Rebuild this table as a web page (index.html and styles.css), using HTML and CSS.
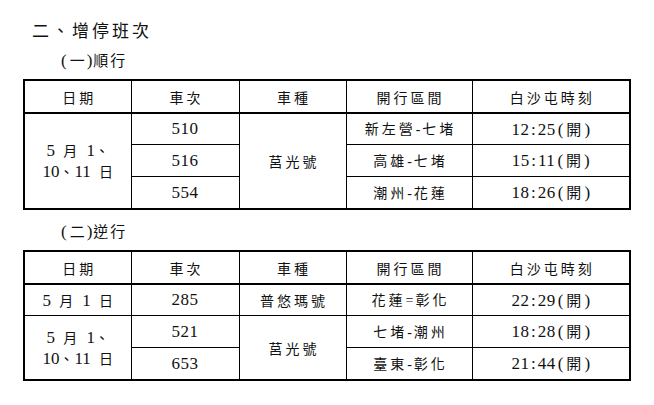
FILE: index.html
```html
<!DOCTYPE html>
<html lang="zh-Hant">
<head>
<meta charset="utf-8">
<link rel="stylesheet" href="styles.css">
</head>
<body>
<div class="page">
  <div class="title">二、增停班次</div>
  <div class="sub"><span class="pl">(</span>一<span class="pr">)</span>順行</div>
  <table class="tbl">
    <colgroup>
      <col class="c1"><col class="c2"><col class="c3"><col class="c4"><col class="c5">
    </colgroup>
    <thead>
      <tr class="hd"><th>日期</th><th>車次</th><th>車種</th><th>開行區間</th><th>白沙屯時刻</th></tr>
    </thead>
    <tbody>
      <tr>
        <td rowspan="3" class="date"><span class="num">5</span> 月 <span class="num">1</span>、<br><span class="num">10</span>、<span class="num">11</span> 日</td>
        <td class="num">510</td>
        <td rowspan="3">莒光號</td>
        <td>新左營<span class="dash">-</span>七堵</td>
        <td class="time"><span class="num">12<span class="colon">:</span>25</span><span class="tl">(</span>開<span class="tr">)</span></td>
      </tr>
      <tr>
        <td class="num">516</td>
        <td>高雄<span class="dash">-</span>七堵</td>
        <td class="time"><span class="num">15<span class="colon">:</span>11</span><span class="tl">(</span>開<span class="tr">)</span></td>
      </tr>
      <tr>
        <td class="num">554</td>
        <td>潮州<span class="dash">-</span>花蓮</td>
        <td class="time"><span class="num">18<span class="colon">:</span>26</span><span class="tl">(</span>開<span class="tr">)</span></td>
      </tr>
    </tbody>
  </table>
  <div class="sub sub2"><span class="pl">(</span>二<span class="pr">)</span>逆行</div>
  <table class="tbl">
    <colgroup>
      <col class="c1"><col class="c2"><col class="c3"><col class="c4"><col class="c5">
    </colgroup>
    <thead>
      <tr class="hd"><th>日期</th><th>車次</th><th>車種</th><th>開行區間</th><th>白沙屯時刻</th></tr>
    </thead>
    <tbody>
      <tr>
        <td class="date"><span class="num">5</span> 月 <span class="num">1</span> 日</td>
        <td class="num">285</td>
        <td>普悠瑪號</td>
        <td>花蓮<span class="dash">=</span>彰化</td>
        <td class="time"><span class="num">22<span class="colon">:</span>29</span><span class="tl">(</span>開<span class="tr">)</span></td>
      </tr>
      <tr>
        <td rowspan="2" class="date"><span class="num">5</span> 月 <span class="num">1</span>、<br><span class="num">10</span>、<span class="num">11</span> 日</td>
        <td class="num">521</td>
        <td rowspan="2">莒光號</td>
        <td>七堵<span class="dash">-</span>潮州</td>
        <td class="time"><span class="num">18<span class="colon">:</span>28</span><span class="tl">(</span>開<span class="tr">)</span></td>
      </tr>
      <tr>
        <td class="num">653</td>
        <td>臺東<span class="dash">-</span>彰化</td>
        <td class="time"><span class="num">21<span class="colon">:</span>44</span><span class="tl">(</span>開<span class="tr">)</span></td>
      </tr>
    </tbody>
  </table>
</div>
</body>
</html>
```
FILE: styles.css
```css
html, body {
  margin: 0;
  padding: 0;
  background: #ffffff;
}
body {
  font-family: "Noto Sans CJK TC", "Noto Sans CJK SC", sans-serif;
  color: #111111;
}
.page {
  padding: 19px 0 0 23px;
}
.title {
  margin-left: 9px;
  font-size: 17px;
  line-height: 21px;
  height: 21px;
  letter-spacing: 3px;
}
.sub {
  margin: 10px 0 9px 37px;
  font-size: 15px;
  line-height: 20px;
  height: 20px;
  letter-spacing: 2px;
}
.sub .pl, .sub .pr {
  font-family: "Liberation Serif", serif;
  font-size: 17px;
  letter-spacing: 0;
}
.sub .pl { margin: 0 3px 0 1px; }
.sub .pr { margin: 0 1px 0 0; }
.sub2 {
  margin-top: 11px;
  margin-bottom: 9px;
}
.num {
  font-family: "Liberation Serif", serif;
}
.tbl {
  border-collapse: collapse;
  width: 606px;
  table-layout: fixed;
  border: 2px solid #000;
}
.c1 { width: 107px; }
.c2 { width: 108px; }
.c3 { width: 107px; }
.c4 { width: 126px; }
.c5 { width: 158px; }
.tbl th, .tbl td {
  border: 1px solid #000;
  padding: 0 0 0 3px;
  text-align: center;
  vertical-align: middle;
  font-size: 14px;
  font-weight: normal;
  letter-spacing: 3px;
  line-height: 20px;
}
.tbl thead th {
  border-bottom: 2px solid #000;
  height: 31px;
}
.tbl tbody td {
  height: 30px;
}
.tbl tbody tr + tr td {
  height: 31px;
}
.tbl td.num {
  font-size: 17px;
  letter-spacing: 0.5px;
  padding-left: 0;
}
.tbl td.time {
  letter-spacing: 0;
  padding-left: 0;
  font-size: 15px;
}
.tbl td.time .num {
  font-size: 17px;
  letter-spacing: 0.5px;
}
.colon {
  margin: 0 1.5px;
}
.tl, .tr {
  font-family: "Liberation Serif", serif;
  font-size: 17px;
}
.tl { margin: 0 3px 0 2px; }
.tr { margin: 0 0 0 3px; }
.tbl td.date {
  line-height: 20px;
  letter-spacing: 1px;
  word-spacing: 4px;
  padding-left: 1px;
}
.tbl td.date .num {
  font-size: 17px;
  letter-spacing: 0;
}
.dash {
  font-family: "Liberation Serif", serif;
  letter-spacing: 2px;
}
```
